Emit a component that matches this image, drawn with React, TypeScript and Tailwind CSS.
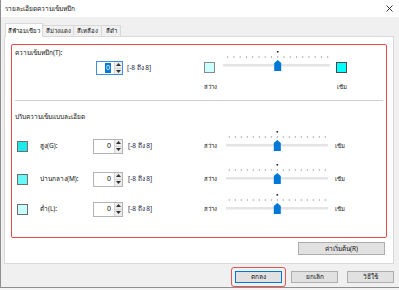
import React from "react";

const FONT = { fontFamily: '"Noto Sans","Liberation Sans",sans-serif' };

function Slider({ w, t1, t2, tick0, step, cx }: { w: number; t1: number; t2: number; tick0: number; step: number; cx: number }) {
  const ticks = Array.from({ length: 17 }, (_, i) => tick0 + i * step);
  return (
    <svg width={w} height={24} viewBox={`0 0 ${w} 24`} className="block shrink-0">
      <rect x={cx - 0.8} y={2} width={1.6} height={1.6} fill="#222" />
      {ticks.map((x, i) => (
        <rect key={i} x={x - 0.5} y={7} width={1} height={2} fill="#b5b5b5" />
      ))}
      <rect x={t1} y={15} width={t2 - t1} height={2.5} fill="#e4e4e4" />
      <path d={`M${cx - 3.5} 22 L${cx + 3.5} 22 L${cx + 3.5} 14 L${cx} 11 L${cx - 3.5} 14 Z`} fill="#0078d7" />
    </svg>
  );
}

function Arrows() {
  return (
    <div className="w-[8px] h-full flex flex-col border-l border-[#d6d6d6]">
      <div className="flex-1 bg-[#ececec] flex items-center justify-center border-b border-[#d6d6d6]">
        <svg width="5" height="3" viewBox="0 0 5 3"><path d="M0 3 L2.5 0 L5 3 Z" fill="#333" /></svg>
      </div>
      <div className="flex-1 bg-[#ececec] flex items-center justify-center">
        <svg width="5" height="3" viewBox="0 0 5 3"><path d="M0 0 L2.5 3 L5 0 Z" fill="#333" /></svg>
      </div>
    </div>
  );
}

function Row({ color, label, mt }: { color: string; label: string; mt: string }) {
  return (
    <div className={`flex items-center h-[16px] ${mt}`}>
      <div className="ml-[5px] w-[11px] h-[11px] border border-[#6e6e6e] shrink-0" style={{ background: color }} />
      <div className="ml-[12px] w-[53px] text-[6.5px] leading-[10px] whitespace-nowrap">{label}</div>
      <div className="w-[30px] h-[15px] border border-[#b4b4b4] bg-white flex items-stretch">
        <div className="flex-1 flex items-center justify-end pr-[3px] text-[7px] leading-[10px]">0</div>
        <Arrows />
      </div>
      <div className="ml-[5px] w-[76px] text-[6.5px] leading-[10px] whitespace-nowrap text-[#1c1c3c]">[-8 ถึง 8]</div>
      <div className="w-[16px] text-[6px] leading-[10px] whitespace-nowrap">สว่าง</div>
      <div className="-mt-[10px]">
        <Slider w={112} t1={6} t2={108} tick0={9.3} step={6} cx={57.3} />
      </div>
      <div className="ml-[3px] text-[6px] leading-[10px] whitespace-nowrap">เข้ม</div>
    </div>
  );
}

export default function App() {
  return (
    <div className="w-[399px] h-[290px] bg-[#f4f4f4] overflow-hidden text-[#111]" style={FONT}>
      <div className="w-[399px] h-[288px] bg-[#f0f0f0] border-l border-b border-[#8f8f8f] flex flex-col">
        {/* title bar */}
        <div className="h-[17px] bg-white flex items-center justify-between pl-[4px] pr-[6px] shrink-0">
          <span className="text-[6.5px] leading-[10px]">รายละเอียดความเข้มหมึก</span>
          <svg width="7" height="7" viewBox="0 0 7 7">
            <path d="M0.5 0.5 L6.5 6.5 M6.5 0.5 L0.5 6.5" stroke="#222" strokeWidth="0.9" />
          </svg>
        </div>
        {/* tabs */}
        <div className="h-[19px] flex items-end pl-[4px] shrink-0 relative z-10">
          <div className="w-[38px] h-[14px] -mb-[1px] bg-white border-t border-l border-r border-[#d9d9d9] flex items-center justify-center text-[6px] leading-[10px] whitespace-nowrap">สีฟ้าอมเขียว</div>
          <div className="w-[31px] h-[11px] border-t border-r border-[#d9d9d9] flex items-center justify-center text-[6px] leading-[10px] whitespace-nowrap">สีม่วงแดง</div>
          <div className="w-[28px] h-[11px] border-t border-r border-[#d9d9d9] flex items-center justify-center text-[6px] leading-[10px] whitespace-nowrap">สีเหลือง</div>
          <div className="w-[19px] h-[11px] border-t border-r border-[#d9d9d9] flex items-center justify-center text-[6px] leading-[10px] whitespace-nowrap">สีดำ</div>
        </div>
        {/* panel */}
        <div className="ml-[3px] w-[390px] h-[228px] bg-white border border-[#d9d9d9] flex flex-col shrink-0">
          <div className="ml-[6px] mt-[7px] w-[376px] h-[194px] border border-[#e34a4a] rounded-[2px] flex flex-col">
            {/* top section */}
            <div className="h-[55px] flex">
              <div className="w-[192px] flex flex-col">
                <div className="pl-[3px] pt-[3px] h-[13px] text-[6.5px] leading-[10px] whitespace-nowrap">ความเข้มหมึก(T):</div>
                <div className="mt-[3px] pl-[84px] flex items-center">
                  <div className="w-[27px] h-[14px] border border-[#3d8ee0] bg-white flex items-stretch">
                    <div className="flex-1 flex items-center justify-end pr-[3px]">
                      <span className="bg-[#0078d7] text-white text-[7px] leading-[10px] px-[1px]">0</span>
                    </div>
                    <Arrows />
                  </div>
                  <div className="ml-[4px] text-[6.5px] leading-[10px] whitespace-nowrap text-[#1c1c3c]">[-8 ถึง 8]</div>
                </div>
              </div>
              <div className="flex flex-col pt-[4px]">
                <div className="flex items-start">
                  <div className="mt-[13px] w-[11px] h-[11px] border border-[#8a8a8a] bg-[#ccffff] shrink-0" />
                  <Slider w={121} t1={8} t2={115} tick0={12.7} step={6.25} cx={62.7} />
                  <div className="mt-[13px] w-[11px] h-[11px] border border-[#4a4a4a] bg-[#00ffff] shrink-0" />
                </div>
                <div className="mt-[9px] flex text-[6px] leading-[10px]">
                  <div className="w-[133px] whitespace-nowrap">สว่าง</div>
                  <div className="whitespace-nowrap">เข้ม</div>
                </div>
              </div>
            </div>
            <div className="mx-[3px] h-[1px] bg-[#cfcfcf]" />
            <div className="mt-[11px] pl-[3px] h-[10px] text-[6.5px] leading-[10px] whitespace-nowrap">ปรับความเข้มแบบละเอียด</div>
            <Row color="#1ee8e8" label="สูง(G):" mt="mt-[16px]" />
            <Row color="#66f7f7" label="ปานกลาง(M):" mt="mt-[17px]" />
            <Row color="#c8ffff" label="ต่ำ(L):" mt="mt-[14px]" />
          </div>
          <div className="mt-[4px] self-end mr-[8px] w-[87px] h-[13px] border border-[#adadad] bg-[#e1e1e1] flex items-center justify-center text-[6.5px] leading-[10px] whitespace-nowrap">ค่าเริ่มต้น(R)</div>
        </div>
        {/* bottom buttons */}
        <div className="mt-[7px] flex justify-end pr-[5px] gap-[9px]">
          <div className="relative">
            <div className="w-[47px] h-[12px] border border-[#0078d7] bg-[#e1e1e1] flex items-center justify-center text-[6.5px] leading-[10px]">ตกลง</div>
            <div className="absolute -left-[4px] -right-[4px] -top-[4px] -bottom-[4px] border border-[#e35555] rounded-[3px]" />
          </div>
          <div className="w-[47px] h-[12px] border border-[#adadad] bg-[#e1e1e1] flex items-center justify-center text-[6.5px] leading-[10px]">ยกเลิก</div>
          <div className="w-[47px] h-[12px] border border-[#adadad] bg-[#e1e1e1] flex items-center justify-center text-[6.5px] leading-[10px]">วิธีใช้</div>
        </div>
      </div>
    </div>
  );
}
